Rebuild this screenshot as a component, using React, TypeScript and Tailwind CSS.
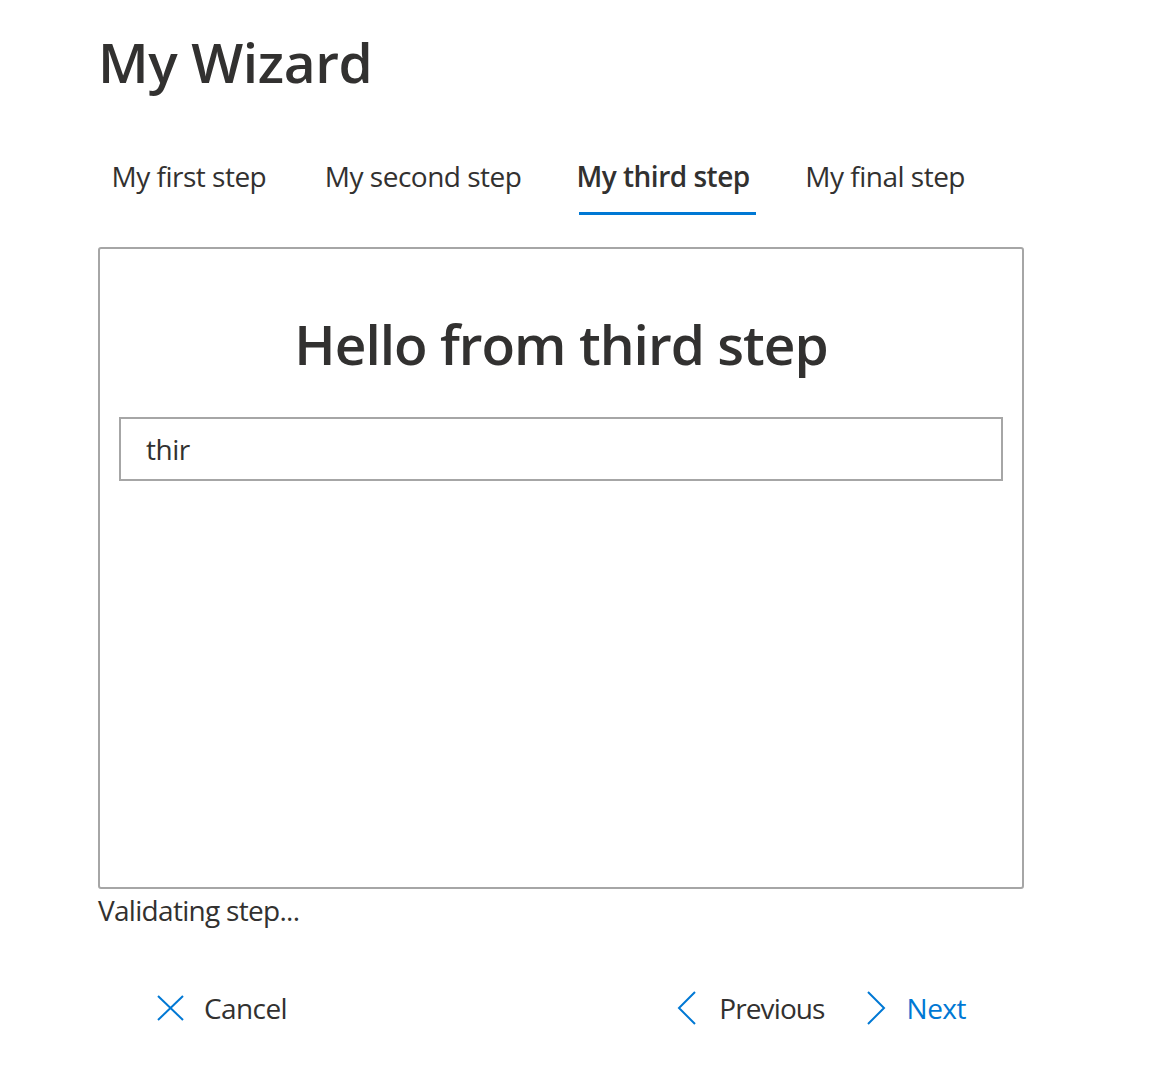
import React, { useState } from "react";

const steps = ["My first step", "My second step", "My third step", "My final step"];

const font = { fontFamily: '"Open Sans", "Noto Sans", sans-serif' };

const CancelIcon = () => (
  <svg width="27" height="26" viewBox="0 0 27 26" fill="none" stroke="#0078d4" strokeWidth="2">
    <line x1="1" y1="1" x2="26" y2="25" />
    <line x1="26" y1="1" x2="1" y2="25" />
  </svg>
);

const ChevronIcon = ({ dir }: { dir: "left" | "right" }) => (
  <svg width="19" height="34" viewBox="0 0 19 34" fill="none" stroke="#0078d4" strokeWidth="2">
    {dir === "left" ? (
      <polyline points="18,1 2,17 18,33" />
    ) : (
      <polyline points="1,1 17,17 1,33" />
    )}
  </svg>
);

export default function App() {
  const [active, setActive] = useState(2);
  const [value, setValue] = useState("thir");

  return (
    <div className="min-h-screen bg-white text-[#323130]" style={font}>
      <div className="ml-[98px] w-[926px] pt-[24px]">
        <h1 className="text-[55px] leading-[76px] font-semibold tracking-[-0.4px]">My Wizard</h1>

        <div className="mt-[57px] flex items-start gap-[32px]">
          {steps.map((step, i) => (
            <button
              key={step}
              onClick={() => setActive(i)}
              className="flex flex-col items-stretch cursor-pointer px-[10px]"
            >
              {/* bold copy keeps the width steady when a tab becomes active */}
              <span className="grid text-[28px] leading-[38px] whitespace-nowrap tracking-[-0.5px]">
                <span className="col-start-1 row-start-1 font-semibold invisible">{step}</span>
                <span
                  className={`col-start-1 row-start-1 text-center ${
                    active === i ? "font-semibold" : "font-normal"
                  }`}
                >
                  {step}
                </span>
              </span>
              <span
                className={`mt-[17px] h-[3px] ml-[3px] -mr-[6px] ${
                  active === i ? "bg-[#0078d4]" : "bg-transparent"
                }`}
              ></span>
            </button>
          ))}
        </div>

        <div className="mt-[32px] h-[642px] border-2 border-[#a6a6a6] rounded-[3px] px-[19px] pt-[57px]">
          <h2 className="text-center text-[55px] leading-[76px] font-semibold tracking-[-1px]">
            Hello from third step
          </h2>
          <input
            value={value}
            onChange={(e) => setValue(e.target.value)}
            className="mt-[35px] block w-full h-[64px] border-2 border-[#a6a6a6] px-[25px] text-[28px] tracking-[-0.5px] text-[#323130] outline-none"
            style={font}
          />
        </div>

        <p className="mt-[2px] text-[28px] leading-[38px] tracking-[-0.7px]">Validating step...</p>

        <div className="mt-[59px] flex items-center justify-between pl-[59px] pr-[58px] h-[40px]">
          <button className="flex items-center gap-[20px] cursor-pointer">
            <CancelIcon />
            <span className="text-[28px] leading-[38px] tracking-[-0.6px]">Cancel</span>
          </button>
          <div className="flex items-center gap-[42px]">
            <button className="flex items-center gap-[23px] cursor-pointer">
              <ChevronIcon dir="left" />
              <span className="text-[28px] leading-[38px] tracking-[-0.9px]">Previous</span>
            </button>
            <button className="flex items-center gap-[21px] cursor-pointer">
              <ChevronIcon dir="right" />
              <span className="text-[28px] leading-[38px] tracking-[-0.5px] text-[#0078d4]">Next</span>
            </button>
          </div>
        </div>
      </div>
    </div>
  );
}
